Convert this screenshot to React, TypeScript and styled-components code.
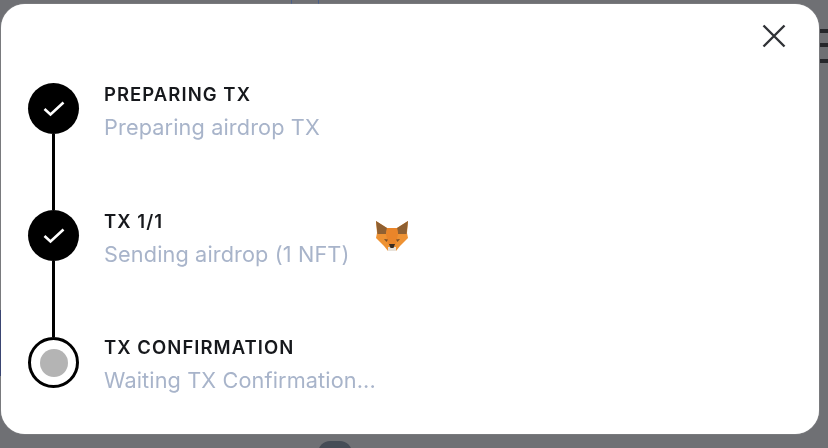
import React from "react";
import styled, { createGlobalStyle } from "styled-components";

const Global = createGlobalStyle`
  html, body { margin: 0; padding: 0; background: #6f7074; }
  body { font-family: Inter, "Liberation Sans", sans-serif; }
`;

const Page = styled.div`
  position: relative;
  width: 828px;
  height: 448px;
  overflow: hidden;
  box-sizing: border-box;
  padding: 4px 9px 14px 1px;
  background: #6f7074;
  filter: blur(0.4px);
`;

const BackdropLine = styled.span<{ $x: number }>`
  position: absolute;
  top: 0;
  left: ${(p) => p.$x}px;
  width: 1px;
  height: 4px;
  background: #4a5f88;
`;

const BackdropEdge = styled.span`
  position: absolute;
  left: 0;
  top: 310px;
  width: 1px;
  height: 66px;
  background: #2c3768;
`;

const BackdropBar = styled.span<{ $y: number }>`
  position: absolute;
  left: 820px;
  top: ${(p) => p.$y}px;
  width: 8px;
  height: 4px;
  background: #26272b;
`;

const BackdropPill = styled.span`
  position: absolute;
  left: 318px;
  top: 441px;
  width: 34px;
  height: 24px;
  border-radius: 12px;
  background: #464c56;
`;

const Modal = styled.section`
  position: relative;
  z-index: 1;
  height: 100%;
  box-sizing: border-box;
  padding: 79px 27px 0;
  background: #fff;
  border-radius: 24px;
  box-shadow: 0 0 1px rgba(255, 255, 255, 0.7);
`;

const CloseButton = styled.button`
  position: absolute;
  top: 19px;
  right: 32px;
  width: 26px;
  height: 26px;
  padding: 0;
  border: 0;
  background: none;
  color: #303236;
  cursor: pointer;
  svg { display: block; }
`;

const Steps = styled.ol`
  list-style: none;
  margin: 0;
  padding: 0;
`;

const Step = styled.li<{ $last?: boolean }>`
  display: flex;
  height: ${(p) => (p.$last ? 51 : 127)}px;
`;

const Rail = styled.div`
  display: flex;
  flex-direction: column;
  align-items: center;
  width: 51px;
  margin-right: 25px;
`;

const DoneDot = styled.div`
  flex: none;
  display: flex;
  align-items: center;
  justify-content: center;
  width: 51px;
  height: 51px;
  border-radius: 50%;
  background: #000;
`;

const PendingDot = styled.div`
  flex: none;
  display: flex;
  align-items: center;
  justify-content: center;
  box-sizing: border-box;
  width: 51px;
  height: 51px;
  border: 3px solid #000;
  border-radius: 50%;
  background: #fff;
`;

const PendingCore = styled.span`
  width: 28px;
  height: 28px;
  border-radius: 50%;
  background: #b4b4b4;
`;

const Connector = styled.div`
  flex: 1;
  width: 3px;
  background: #000;
`;

const Copy = styled.div<{ $tight?: boolean }>`
  display: flex;
  flex-direction: column;
  gap: 13px;
  padding-top: ${(p) => (p.$tight ? 0 : 1)}px;
`;

const Title = styled.div`
  font-size: 18.5px;
  line-height: 20px;
  font-weight: 600;
  letter-spacing: 1.05px;
  color: #16181c;
  white-space: nowrap;
`;

const Subtitle = styled.div`
  font-size: 21.7px;
  line-height: 20px;
  font-weight: 400;
  letter-spacing: 0.12px;
  color: #a8b4ca;
  white-space: nowrap;
`;

const WalletBadge = styled.div`
  margin-left: 26px;
  margin-top: 10px;
  width: 34px;
  height: 32px;
  svg { display: block; }
`;

const Check = () => (
  <svg width="22" height="16" viewBox="0 0 22 16" fill="none">
    <path d="M1.5 8 L7.5 13.5 L20.5 1.5" stroke="#fff" strokeWidth="2.6" />
  </svg>
);

const Fox = () => (
  <svg width="34" height="32" viewBox="0 0 34 32">
    <path d="M1 1 L12 8 L22 8 L33 1 L32 13 L33 18 L25 26 L21 31 L13 31 L9 26 L1 18 L2 13 Z" fill="#ee9233" />
    <path d="M1 1 L12 8 L11 14 L2.5 14 Z" fill="#8f6032" />
    <path d="M33 1 L22 8 L23 14 L31.5 14 Z" fill="#8f6032" />
    <path d="M12 8 L22 8 L23 14 L21 24 L13 24 L11 14 Z" fill="#e9852a" />
    <path d="M9 19 L13 19.5 L11.5 22 Z" fill="#7a4f2a" />
    <path d="M25 19 L21 19.5 L22.5 22 Z" fill="#7a4f2a" />
    <path d="M13 27 L21 27 L21 31 L13 31 Z" fill="#e8e2da" />
    <path d="M14 24 L20 24 L18.5 28 L15.5 28 Z" fill="#3a2c22" />
  </svg>
);

export default function App() {
  return (
    <Page>
      <Global />
      <BackdropLine $x={291} />
      <BackdropLine $x={318} />
      <BackdropEdge />
      <BackdropBar $y={29} />
      <BackdropBar $y={43} />
      <BackdropBar $y={59} />
      <BackdropPill />
      <Modal>
        <CloseButton aria-label="Close">
          <svg width="26" height="26" viewBox="0 0 26 26" fill="none">
            <path d="M2.5 2.5 L23.5 23.5 M23.5 2.5 L2.5 23.5" stroke="currentColor" strokeWidth="2.4" />
          </svg>
        </CloseButton>
        <Steps>
          <Step>
            <Rail>
              <DoneDot><Check /></DoneDot>
              <Connector />
            </Rail>
            <Copy>
              <Title>PREPARING TX</Title>
              <Subtitle>Preparing airdrop TX</Subtitle>
            </Copy>
          </Step>
          <Step>
            <Rail>
              <DoneDot><Check /></DoneDot>
              <Connector />
            </Rail>
            <Copy>
              <Title>TX 1/1</Title>
              <Subtitle>Sending airdrop (1 NFT)</Subtitle>
            </Copy>
            <WalletBadge><Fox /></WalletBadge>
          </Step>
          <Step $last>
            <Rail>
              <PendingDot><PendingCore /></PendingDot>
            </Rail>
            <Copy $tight>
              <Title>TX CONFIRMATION</Title>
              <Subtitle>Waiting TX Confirmation...</Subtitle>
            </Copy>
          </Step>
        </Steps>
      </Modal>
    </Page>
  );
}
